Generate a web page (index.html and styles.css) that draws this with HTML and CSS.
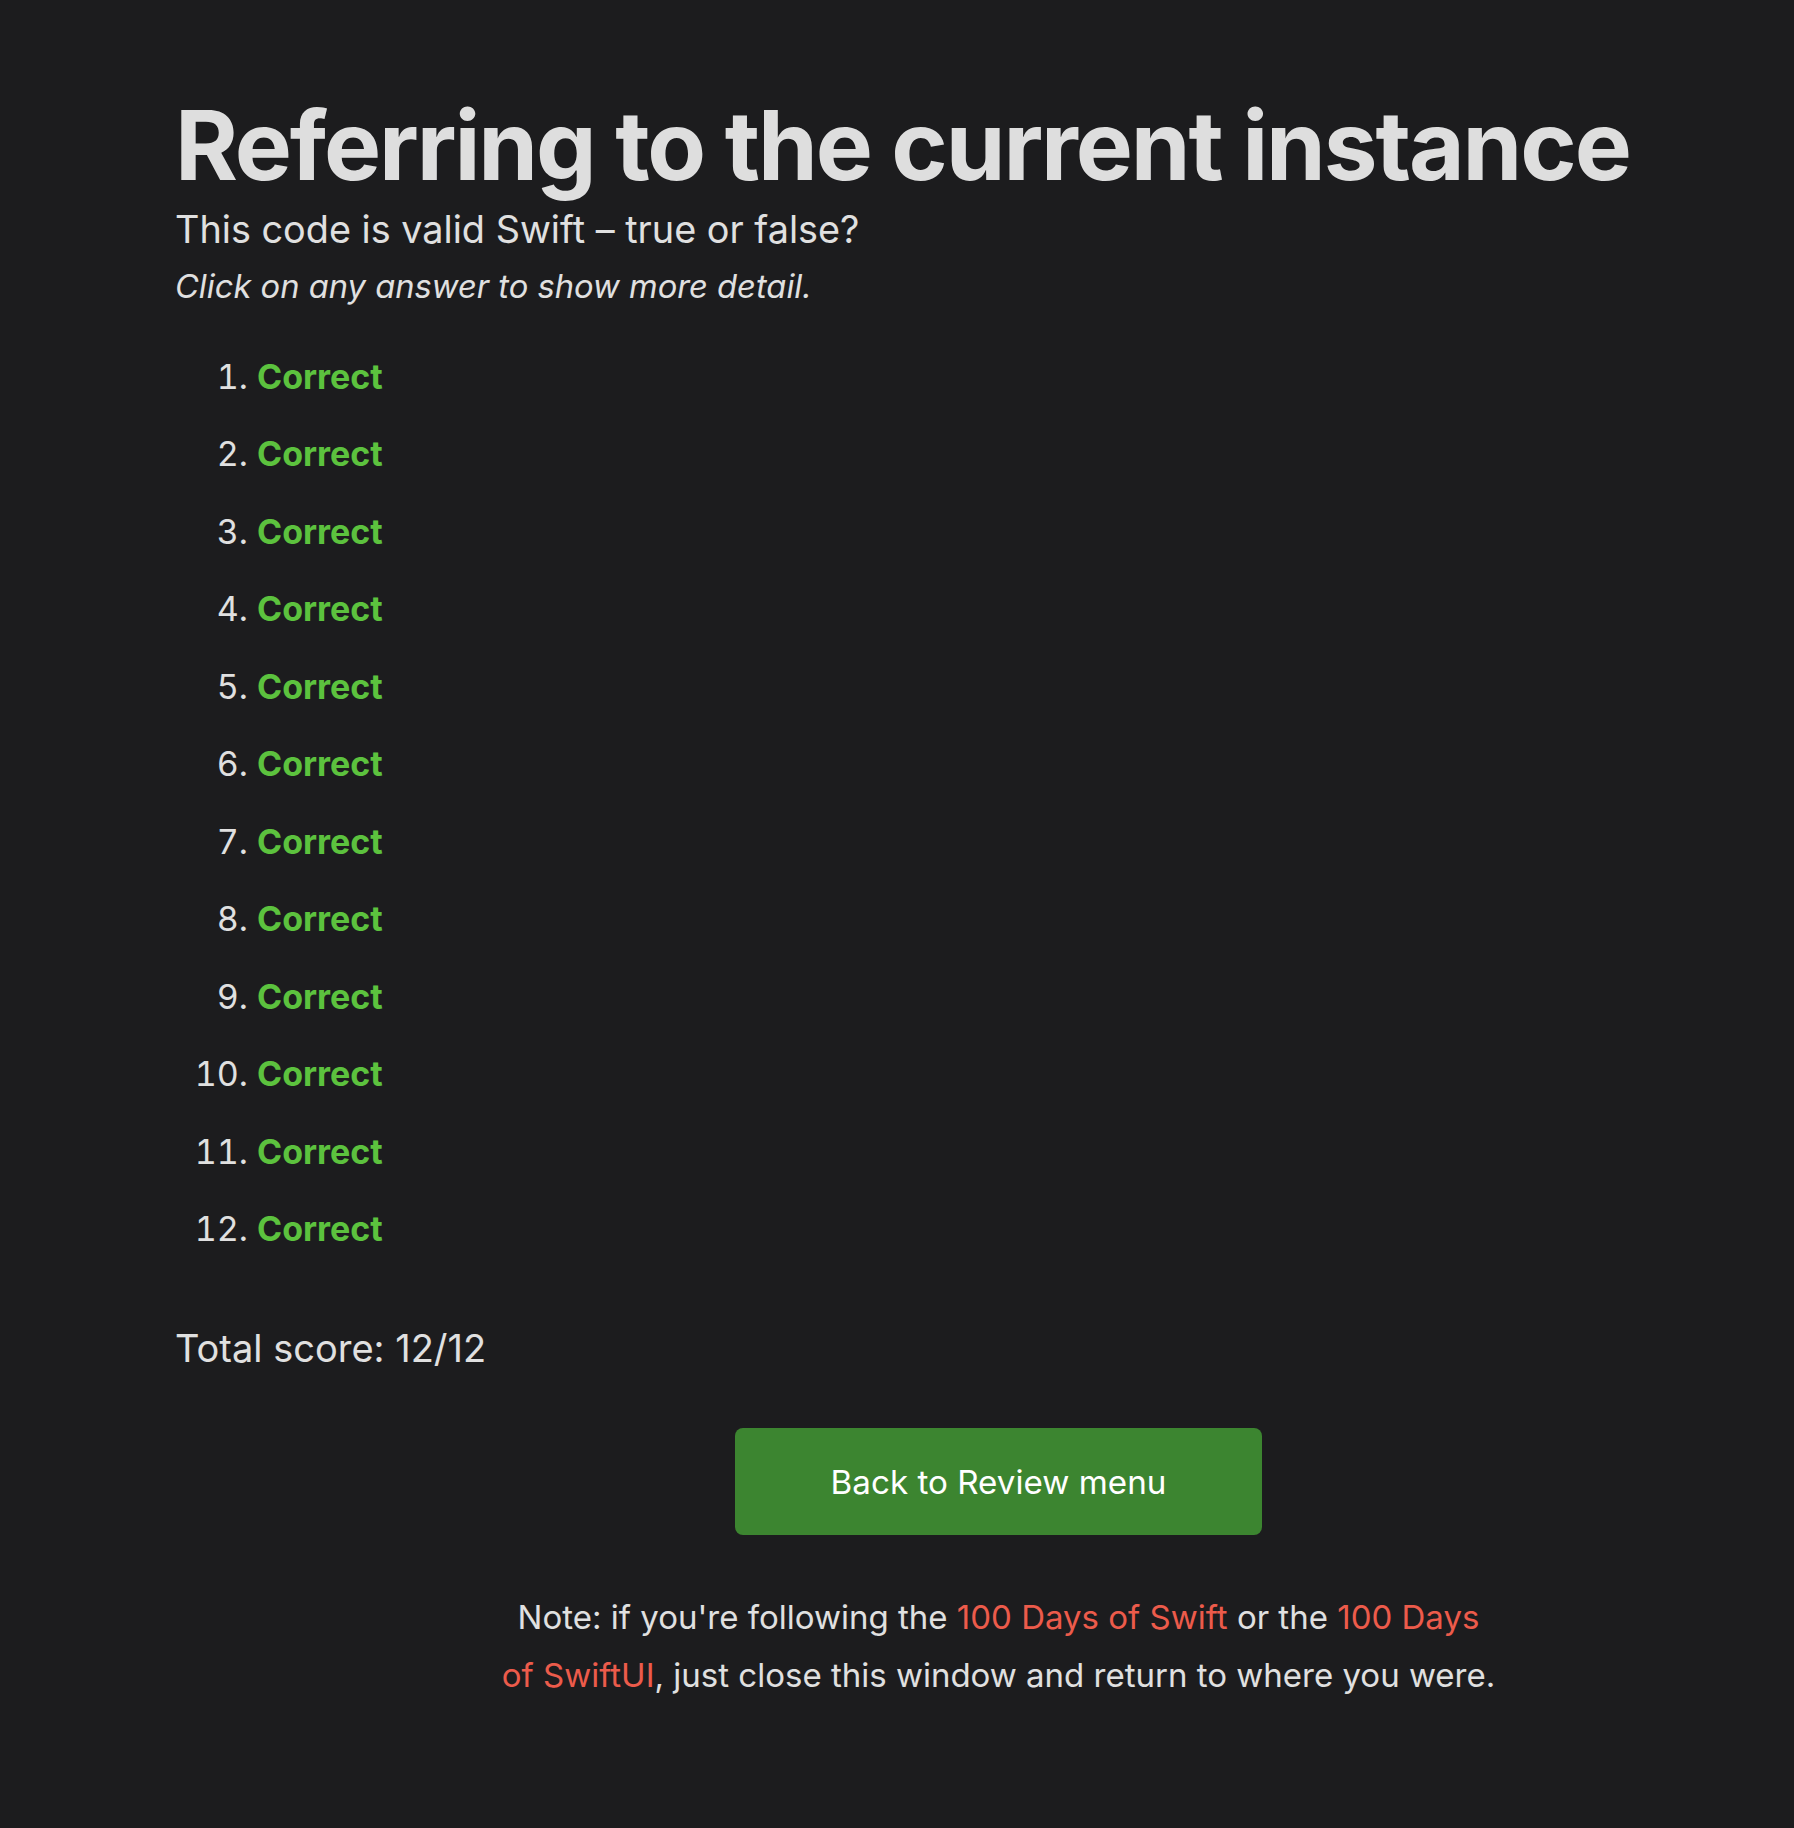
FILE: index.html
```html
<!DOCTYPE html>
<html lang="en">
<head>
<meta charset="utf-8">
<title>Referring to the current instance</title>
<link rel="stylesheet" href="styles.css">
</head>
<body>
<main class="page">
  <h1 class="title">Referring to the current instance</h1>
  <p class="subtitle">This code is valid Swift – true or false?</p>
  <p class="hint">Click on any answer to show more detail.</p>
  <ol class="answers">
    <li><span class="correct">Correct</span></li>
    <li><span class="correct">Correct</span></li>
    <li><span class="correct">Correct</span></li>
    <li><span class="correct">Correct</span></li>
    <li><span class="correct">Correct</span></li>
    <li><span class="correct">Correct</span></li>
    <li><span class="correct">Correct</span></li>
    <li><span class="correct">Correct</span></li>
    <li><span class="correct">Correct</span></li>
    <li><span class="correct">Correct</span></li>
    <li><span class="correct">Correct</span></li>
    <li><span class="correct">Correct</span></li>
  </ol>
  <p class="score">Total score: 12/12</p>
  <div class="footer">
    <a class="button" href="#">Back to Review menu</a>
    <p class="note">Note: if you're following the <a href="#">100 Days of Swift</a> or the <a href="#">100 Days of SwiftUI</a>, just close this window and return to where you were.</p>
  </div>
</main>
</body>
</html>
```
FILE: styles.css
```css
html, body {
  margin: 0;
  padding: 0;
  background: #1c1c1e;
}
body {
  color: #e0e0e0;
  font-family: Inter, "Noto Sans", sans-serif;
  font-size: 33px;
}
.page {
  padding: 88px 150px 120px 175px;
}
.title {
  margin: 0;
  font-size: 96px;
  line-height: 1.2;
  font-weight: 700;
  letter-spacing: -2.1px;
  white-space: nowrap;
  color: #dedede;
}
.subtitle {
  margin: 2px 0 0;
  font-size: 37.8px;
  line-height: 1.3;
}
.hint {
  margin: 8px 0 0;
  font-size: 32.7px;
  line-height: 48px;
  font-style: italic;
}
.answers {
  margin: 42.6px 0 0;
  padding-left: 82px;
}
.answers li {
  font-size: 34px;
  line-height: 48px;
  margin-bottom: 29.5px;
}
.answers li:last-child {
  margin-bottom: 0;
}
.correct {
  color: #5cc23e;
  font-weight: 700;
}
.score {
  margin: 70.4px 0 0;
  font-size: 38px;
  line-height: 1.3;
}
.footer {
  margin-top: 55px;
  padding-left: 178px;
  display: flex;
  flex-direction: column;
  align-items: center;
}
.button {
  display: flex;
  align-items: center;
  justify-content: center;
  width: 527px;
  height: 107px;
  box-sizing: border-box;
  background: #3c8530;
  color: #ffffff;
  border-radius: 8px;
  text-decoration: none;
  font-size: 33.2px;
}
.note {
  margin: 53px 0 0;
  max-width: 996px;
  text-align: center;
  font-size: 33px;
  line-height: 58px;
}
.note a {
  color: #ec5b4b;
  text-decoration: none;
}
```
